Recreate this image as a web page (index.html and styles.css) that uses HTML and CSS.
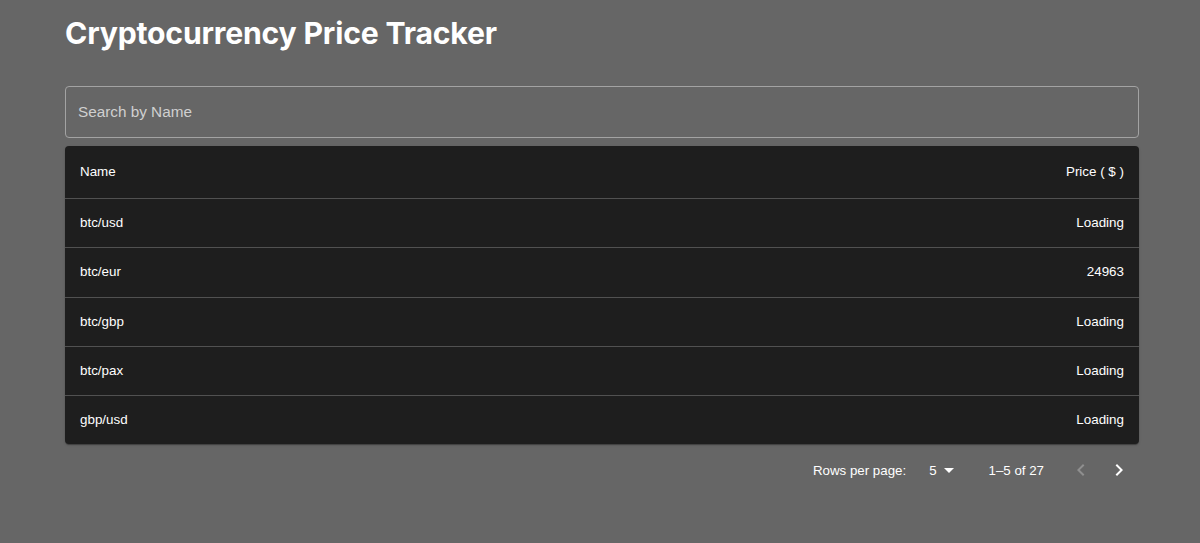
FILE: index.html
```html
<!DOCTYPE html>
<html lang="en">

<head>
    <meta charset="UTF-8">
    <meta name="viewport" content="width=device-width, initial-scale=1.0">
    <title>Cryptocurrency Price Tracker</title>
    <link rel="stylesheet" href="styles.css">
</head>

<body>
    <div class="page">
        <h1 class="title">Cryptocurrency Price Tracker</h1>

        <div class="search">
            <input type="text" class="search-input" placeholder="Search by Name">
        </div>

        <div class="paper">
            <table class="price-table">
                <thead>
                    <tr>
                        <th>Name</th>
                        <th class="right">Price ( $ )</th>
                    </tr>
                </thead>
                <tbody>
                    <tr>
                        <td>btc/usd</td>
                        <td class="right">Loading</td>
                    </tr>
                    <tr>
                        <td>btc/eur</td>
                        <td class="right">24963</td>
                    </tr>
                    <tr>
                        <td>btc/gbp</td>
                        <td class="right">Loading</td>
                    </tr>
                    <tr>
                        <td>btc/pax</td>
                        <td class="right">Loading</td>
                    </tr>
                    <tr>
                        <td>gbp/usd</td>
                        <td class="right">Loading</td>
                    </tr>
                </tbody>
            </table>
        </div>

        <div class="pagination">
            <span class="rows-label">Rows per page:</span>
            <span class="rows-select">
                5
                <svg class="caret" width="24" height="24" viewBox="0 0 24 24"><path d="M7 10l5 5 5-5z" fill="#fff"/></svg>
            </span>
            <span class="range">1–5 of 27</span>
            <button class="page-btn disabled" type="button">
                <svg width="24" height="24" viewBox="0 0 24 24"><path d="M15.41 7.41 14 6l-6 6 6 6 1.41-1.41L10.83 12z" fill="currentColor"/></svg>
            </button>
            <button class="page-btn" type="button">
                <svg width="24" height="24" viewBox="0 0 24 24"><path d="M10 6 8.59 7.41 13.17 12l-4.58 4.59L10 18l6-6z" fill="currentColor"/></svg>
            </button>
        </div>
    </div>
</body>

</html>
```

FILE: styles.css
```css
body {
    margin: 0;
    background-color: #666666;
    font-family: "Liberation Sans", Arial, sans-serif;
    color: #fff;
}

.page {
    margin: 0 61px 0 65px;
}

.title {
    font-family: Inter, "Noto Sans", sans-serif;
    font-weight: 700;
    font-size: 30.2px;
    line-height: 38px;
    margin: 14px 0 34px 0;
    letter-spacing: -0.2px;
}

.search {
    margin-bottom: 8px;
}

.search-input {
    display: block;
    width: 100%;
    box-sizing: border-box;
    height: 52px;
    padding: 0 12px 1px 12px;
    background: transparent;
    border: 1px solid #a3a3a3;
    border-radius: 4px;
    font-family: "Liberation Sans", Arial, sans-serif;
    font-size: 15.3px;
    color: #fff;
    outline: none;
}

.search-input::placeholder {
    color: #d0d0d0;
}

.paper {
    background-color: #1e1e1e;
    border-radius: 4px;
    box-shadow: 0 2px 1px -1px rgba(0, 0, 0, 0.2), 0 1px 1px 0 rgba(0, 0, 0, 0.14), 0 1px 3px 0 rgba(0, 0, 0, 0.12);
    overflow: hidden;
}

.price-table {
    width: 100%;
    border-collapse: collapse;
    font-size: 13.4px;
}

.price-table th,
.price-table td {
    text-align: left;
    font-weight: 400;
    line-height: 20px;
    border-bottom: 1px solid #515151;
}

.price-table th {
    padding: 16px 15px;
}

.price-table td {
    padding: 14px 15px;
    line-height: 20.25px;
}

.price-table tbody tr:last-child td {
    border-bottom: none;
}

.price-table .right {
    text-align: right;
}

.pagination {
    display: flex;
    align-items: center;
    justify-content: flex-end;
    height: 52px;
    font-size: 13.3px;
    padding-right: 1px;
}

.rows-label {
    margin-right: 23px;
}

.rows-select {
    display: flex;
    align-items: center;
    margin-right: 28px;
}

.range {
    margin-right: 18px;
}

.page-btn {
    background: none;
    border: none;
    color: #fff;
    padding: 7px;
    display: flex;
    cursor: pointer;
}

.page-btn.disabled {
    color: #8f8f8f;
}
```
